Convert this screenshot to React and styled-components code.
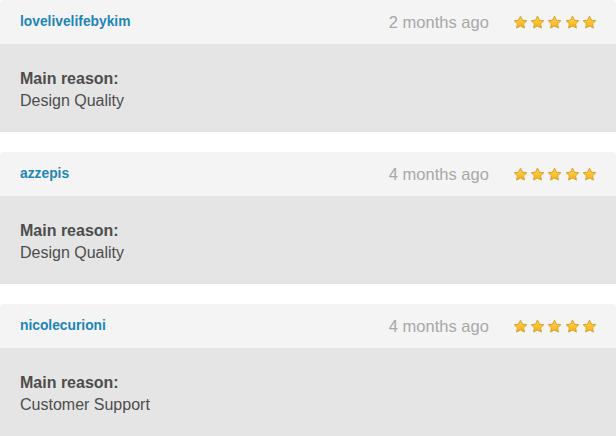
import React from "react";
import styled, { createGlobalStyle } from "styled-components";

const GlobalStyle = createGlobalStyle`
  body {
    margin: 0;
    background: #ffffff;
    font-family: "Liberation Sans", Arial, Helvetica, sans-serif;
  }
`;

const List = styled.div`
  width: 616px;
  display: flex;
  flex-direction: column;
  gap: 20px;
`;

const Card = styled.div`
  border-radius: 4px 4px 0 0;
  overflow: hidden;
`;

const Header = styled.div`
  height: 44px;
  background: #f4f4f4;
  display: flex;
  align-items: center;
  padding: 0 19px 0 20px;
`;

const User = styled.a`
  flex: 1;
  color: #1c86b9;
  font-size: 13.8px;
  font-weight: bold;
  text-decoration: none;
  margin-top: -2px;
`;

const Time = styled.span`
  color: #a8a8a8;
  font-size: 16.5px;
  margin-right: 24px;
  margin-top: 1px;
`;

const Stars = styled.div`
  display: flex;
  gap: 2.3px;
`;

const Body = styled.div`
  background: #e5e5e5;
  padding: 24px 20px 20px;
  color: #4d4d4d;
  font-size: 16px;
  line-height: 22px;
`;

const Label = styled.div`
  font-weight: bold;
`;

function Star() {
  return (
    <svg width="15" height="15" viewBox="0 0 16 16">
      <defs>
        <linearGradient id="sg" x1="0" y1="0" x2="0" y2="1">
          <stop offset="0" stopColor="#ffd64f" />
          <stop offset="1" stopColor="#f5b21c" />
        </linearGradient>
      </defs>
      <path
        d="M8 1.2l2.05 4.3 4.65.6-3.4 3.2.85 4.6L8 11.65 3.85 13.9l.85-4.6-3.4-3.2 4.65-.6z"
        fill="url(#sg)"
        stroke="#d99a1f"
        strokeWidth="1"
        strokeLinejoin="round"
      />
    </svg>
  );
}

const reviews = [
  { user: "lovelivelifebykim", time: "2 months ago", reason: "Design Quality" },
  { user: "azzepis", time: "4 months ago", reason: "Design Quality" },
  { user: "nicolecurioni", time: "4 months ago", reason: "Customer Support" },
];

export default function App() {
  return (
    <>
      <GlobalStyle />
      <List>
        {reviews.map((r) => (
          <Card key={r.user}>
            <Header>
              <User href="#">{r.user}</User>
              <Time>{r.time}</Time>
              <Stars>
                {[0, 1, 2, 3, 4].map((i) => (
                  <Star key={i} />
                ))}
              </Stars>
            </Header>
            <Body>
              <Label>Main reason:</Label>
              <div>{r.reason}</div>
            </Body>
          </Card>
        ))}
      </List>
    </>
  );
}
